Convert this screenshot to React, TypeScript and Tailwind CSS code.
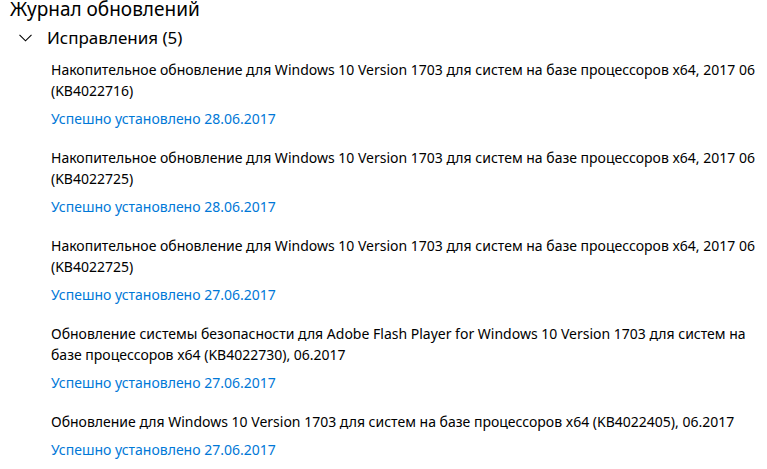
const updates = [
  {
    lines: [
      'Накопительное обновление для Windows 10 Version 1703 для систем на базе процессоров x64, 2017 06',
      '(KB4022716)',
    ],
    status: 'Успешно установлено 28.06.2017',
  },
  {
    lines: [
      'Накопительное обновление для Windows 10 Version 1703 для систем на базе процессоров x64, 2017 06',
      '(KB4022725)',
    ],
    status: 'Успешно установлено 28.06.2017',
  },
  {
    lines: [
      'Накопительное обновление для Windows 10 Version 1703 для систем на базе процессоров x64, 2017 06',
      '(KB4022725)',
    ],
    status: 'Успешно установлено 27.06.2017',
  },
  {
    lines: [
      'Обновление системы безопасности для Adobe Flash Player for Windows 10 Version 1703 для систем на',
      'базе процессоров x64 (KB4022730), 06.2017',
    ],
    status: 'Успешно установлено 27.06.2017',
  },
  {
    lines: [
      'Обновление для Windows 10 Version 1703 для систем на базе процессоров x64 (KB4022405), 06.2017',
    ],
    status: 'Успешно установлено 27.06.2017',
  },
];

export default function App() {
  return (
    <div
      className="w-[767px] h-[469px] overflow-hidden bg-white text-black"
      style={{ fontFamily: '"Noto Sans", "Open Sans", sans-serif' }}
    >
      {/* Page title, partly scrolled out */}
      <h1 className="-mt-[5px] pl-[10px] text-[19px] leading-[28px] font-normal">
        Журнал обновлений
      </h1>

      {/* Group header */}
      <div className="mt-[3px] flex items-center h-[24px]">
        <svg
          className="ml-[19px] mr-[15px]"
          width="13"
          height="8"
          viewBox="0 0 13 8"
          fill="none"
        >
          <path d="M0.5 0.8 L6.5 6.8 L12.5 0.8" stroke="#000" strokeWidth="1.1" />
        </svg>
        <span className="text-[17px] leading-[24px]">Исправления (5)</span>
      </div>

      {/* Update list */}
      <div className="pl-[51px] pt-[9px] flex flex-col gap-[18px]">
        {updates.map((u, i) => (
          <div key={i} className="flex flex-col">
            {u.lines.map((l) => (
              <span key={l} className="block whitespace-nowrap text-[14px] leading-[21px]">
                {l}
              </span>
            ))}
            <span className="mt-[7px] text-[14px] leading-[21px] text-[#0078d7]">
              {u.status}
            </span>
          </div>
        ))}
      </div>
    </div>
  );
}
